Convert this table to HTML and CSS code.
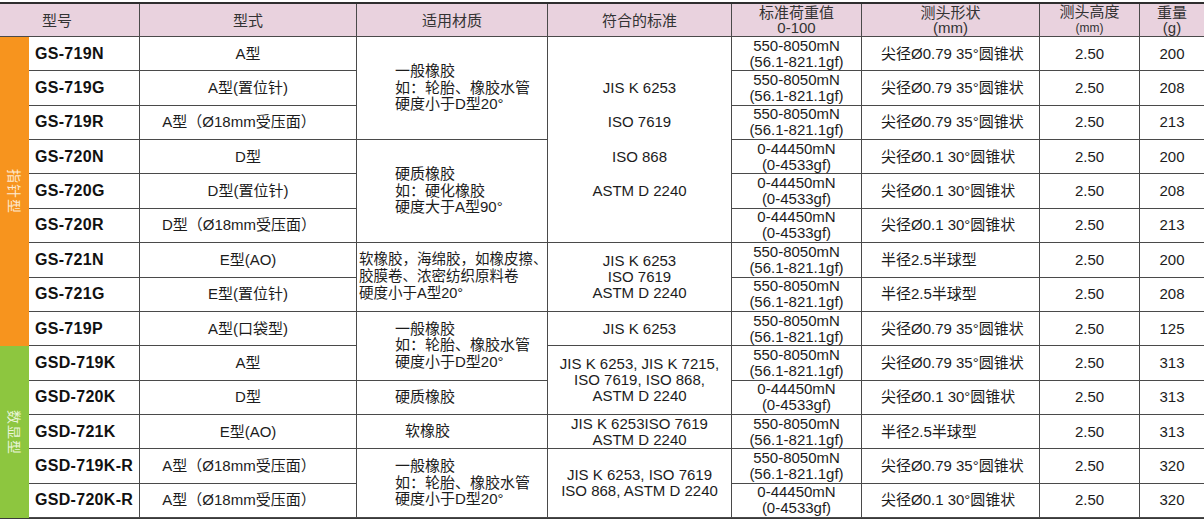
FILE: index.html
```html
<!DOCTYPE html>
<html lang="zh-CN">
<head>
<meta charset="utf-8">
<title>硬度计规格表</title>
<link rel="stylesheet" href="styles.css">
</head>
<body>
<div class="sheet">
  <div class="cell hd hd-model">型号</div>
  <div class="cell hd c3">型式</div>
  <div class="cell hd c4">适用材质</div>
  <div class="cell hd c5">符合的标准</div>
  <div class="cell hd c6"><div>标准荷重值<br>0-100</div></div>
  <div class="cell hd c7"><div>测头形状<br>(mm)</div></div>
  <div class="cell hd c8"><div>测头高度<br><span class="small">(mm)</span></div></div>
  <div class="cell hd c9 last"><div>重量<br>(g)</div></div>

  <!-- row 1 -->
  <div class="grp orange"><span class="vt">指针型</span></div>
  <div class="cell model">GS-719N</div>
  <div class="cell c3">A型</div>
  <div class="cell c4 mat span3"><div>一般橡胶<br>如：轮胎、橡胶水管<br>硬度小于D型20°</div></div>
  <div class="cell c5 span6 tall"><div>JIS K 6253<br>ISO 7619<br>ISO 868<br>ASTM D 2240</div></div>
  <div class="cell c6"><div>550-8050mN<br>(56.1-821.1gf)</div></div>
  <div class="cell c7 shape">尖径Ø0.79 35°圆锥状</div>
  <div class="cell c8">2.50</div>
  <div class="cell c9 last">200</div>

  <!-- row 2 -->
  <div class="cell model">GS-719G</div>
  <div class="cell c3">A型(置位针)</div>
  <div class="cell c6"><div>550-8050mN<br>(56.1-821.1gf)</div></div>
  <div class="cell c7 shape">尖径Ø0.79 35°圆锥状</div>
  <div class="cell c8">2.50</div>
  <div class="cell c9 last">208</div>

  <!-- row 3 -->
  <div class="cell model">GS-719R</div>
  <div class="cell c3 shift">A型（Ø18mm受压面）</div>
  <div class="cell c6"><div>550-8050mN<br>(56.1-821.1gf)</div></div>
  <div class="cell c7 shape">尖径Ø0.79 35°圆锥状</div>
  <div class="cell c8">2.50</div>
  <div class="cell c9 last">213</div>

  <!-- row 4 -->
  <div class="cell model">GS-720N</div>
  <div class="cell c3">D型</div>
  <div class="cell c4 mat span3"><div>硬质橡胶<br>如：硬化橡胶<br>硬度大于A型90°</div></div>
  <div class="cell c6"><div>0-44450mN<br>(0-4533gf)</div></div>
  <div class="cell c7 shape">尖径Ø0.1 30°圆锥状</div>
  <div class="cell c8">2.50</div>
  <div class="cell c9 last">200</div>

  <!-- row 5 -->
  <div class="cell model">GS-720G</div>
  <div class="cell c3">D型(置位针)</div>
  <div class="cell c6"><div>0-44450mN<br>(0-4533gf)</div></div>
  <div class="cell c7 shape">尖径Ø0.1 30°圆锥状</div>
  <div class="cell c8">2.50</div>
  <div class="cell c9 last">208</div>

  <!-- row 6 -->
  <div class="cell model">GS-720R</div>
  <div class="cell c3 shift">D型（Ø18mm受压面）</div>
  <div class="cell c6"><div>0-44450mN<br>(0-4533gf)</div></div>
  <div class="cell c7 shape">尖径Ø0.1 30°圆锥状</div>
  <div class="cell c8">2.50</div>
  <div class="cell c9 last">213</div>

  <!-- row 7 -->
  <div class="cell model">GS-721N</div>
  <div class="cell c3">E型(AO)</div>
  <div class="cell c4 mat soft span2"><div>软橡胶，海绵胶，如橡皮擦、<br>胶膜卷、浓密纺织原料卷<br>硬度小于A型20°</div></div>
  <div class="cell c5 span2"><div>JIS K 6253<br>ISO 7619<br>ASTM D 2240</div></div>
  <div class="cell c6"><div>550-8050mN<br>(56.1-821.1gf)</div></div>
  <div class="cell c7 shape">半径2.5半球型</div>
  <div class="cell c8">2.50</div>
  <div class="cell c9 last">200</div>

  <!-- row 8 -->
  <div class="cell model">GS-721G</div>
  <div class="cell c3">E型(置位针)</div>
  <div class="cell c6"><div>550-8050mN<br>(56.1-821.1gf)</div></div>
  <div class="cell c7 shape">半径2.5半球型</div>
  <div class="cell c8">2.50</div>
  <div class="cell c9 last">208</div>

  <!-- row 9 -->
  <div class="cell model">GS-719P</div>
  <div class="cell c3">A型(口袋型)</div>
  <div class="cell c4 mat span2"><div>一般橡胶<br>如：轮胎、橡胶水管<br>硬度小于D型20°</div></div>
  <div class="cell c5">JIS K 6253</div>
  <div class="cell c6"><div>550-8050mN<br>(56.1-821.1gf)</div></div>
  <div class="cell c7 shape">尖径Ø0.79 35°圆锥状</div>
  <div class="cell c8">2.50</div>
  <div class="cell c9 last">125</div>

  <!-- row 10 -->
  <div class="grp green"><span class="vt">数显型</span></div>
  <div class="cell model">GSD-719K</div>
  <div class="cell c3">A型</div>
  <div class="cell c5 span2"><div>JIS K 6253, JIS K 7215,<br>ISO 7619, ISO 868,<br>ASTM D 2240</div></div>
  <div class="cell c6"><div>550-8050mN<br>(56.1-821.1gf)</div></div>
  <div class="cell c7 shape">尖径Ø0.79 35°圆锥状</div>
  <div class="cell c8">2.50</div>
  <div class="cell c9 last">313</div>

  <!-- row 11 -->
  <div class="cell model">GSD-720K</div>
  <div class="cell c3">D型</div>
  <div class="cell c4 mat">硬质橡胶</div>
  <div class="cell c6"><div>0-44450mN<br>(0-4533gf)</div></div>
  <div class="cell c7 shape">尖径Ø0.1 30°圆锥状</div>
  <div class="cell c8">2.50</div>
  <div class="cell c9 last">313</div>

  <!-- row 12 -->
  <div class="cell model">GSD-721K</div>
  <div class="cell c3">E型(AO)</div>
  <div class="cell c4 mat inset">软橡胶</div>
  <div class="cell c5"><div>JIS K 6253ISO 7619<br>ASTM D 2240</div></div>
  <div class="cell c6"><div>550-8050mN<br>(56.1-821.1gf)</div></div>
  <div class="cell c7 shape">半径2.5半球型</div>
  <div class="cell c8">2.50</div>
  <div class="cell c9 last">313</div>

  <!-- row 13 -->
  <div class="cell model">GSD-719K-R</div>
  <div class="cell c3 shift">A型（Ø18mm受压面）</div>
  <div class="cell c4 mat span2"><div>一般橡胶<br>如：轮胎、橡胶水管<br>硬度小于D型20°</div></div>
  <div class="cell c5 span2"><div>JIS K 6253, ISO 7619<br>ISO 868, ASTM D 2240</div></div>
  <div class="cell c6"><div>550-8050mN<br>(56.1-821.1gf)</div></div>
  <div class="cell c7 shape">尖径Ø0.79 35°圆锥状</div>
  <div class="cell c8">2.50</div>
  <div class="cell c9 last">320</div>

  <!-- row 14 -->
  <div class="cell model">GSD-720K-R</div>
  <div class="cell c3 shift">A型（Ø18mm受压面）</div>
  <div class="cell c6"><div>0-44450mN<br>(0-4533gf)</div></div>
  <div class="cell c7 shape">尖径Ø0.1 30°圆锥状</div>
  <div class="cell c8">2.50</div>
  <div class="cell c9 last">320</div>
</div>
</body>
</html>
```

FILE: styles.css
```css
html, body {
  margin: 0;
  padding: 0;
  background: #ffffff;
}

body {
  font-family: "Liberation Sans", "Noto Sans CJK SC", sans-serif;
  color: #1c1c1c;
}

.sheet {
  box-sizing: border-box;
  width: 1204px;
  height: 517px;
  margin-top: 2px;
  border-top: 2px solid #2e2e2e;
  border-bottom: 1px solid #3a3a3a;
  display: grid;
  grid-template-columns: 29px 111px 217px 191px 184px 130px 178px 100px 64px;
  grid-template-rows: 33px repeat(14, 1fr);
}

.cell {
  box-sizing: border-box;
  border-right: 1px solid #4a4a4a;
  border-bottom: 1px solid #4a4a4a;
  display: flex;
  align-items: center;
  justify-content: center;
  text-align: center;
  font-size: 15px;
  line-height: 16px;
  white-space: nowrap;
  min-width: 0;
}

.cell.last {
  border-right: none;
}

.hd {
  background: #e9d2de;
  color: #333333;
  line-height: 15px;
}

.hd .small {
  font-size: 12px;
}

.hd-model {
  grid-column: 1 / 3;
  justify-content: flex-start;
  padding-left: 42px;
}

.c3 { grid-column: 3; }
.c4 { grid-column: 4; }
.c5 { grid-column: 5; }
.c6 { grid-column: 6; }
.c7 { grid-column: 7; }
.c8 { grid-column: 8; }
.c9 { grid-column: 9; }

.span2 { grid-row: span 2; }
.span3 { grid-row: span 3; }
.span6 { grid-row: span 6; }

.grp {
  grid-column: 1;
  display: flex;
  align-items: center;
  justify-content: center;
}

.grp.orange {
  grid-row: span 9;
  background: #f7941e;
  color: #fde9cf;
}

.grp.green {
  grid-row: span 5;
  background: #8dc63f;
  color: #eaf5d8;
}

.vt {
  writing-mode: vertical-rl;
  text-orientation: sideways;
  font-size: 14px;
  letter-spacing: 1px;
}

.model {
  grid-column: 2;
  justify-content: flex-start;
  padding-left: 6px;
  font-weight: bold;
  font-size: 16px;
  letter-spacing: 0.3px;
  color: #111111;
}

.shift {
  padding-right: 18px;
}

.mat {
  justify-content: flex-start;
  text-align: left;
  padding-left: 38px;
  line-height: 16.5px;
}

.mat.soft {
  padding-left: 2px;
  font-size: 14.5px;
  line-height: 17px;
}

.mat.inset {
  padding-left: 48px;
}

.tall {
  line-height: 34.36px;
}

.shape {
  justify-content: flex-start;
  padding-left: 19px;
}
```
